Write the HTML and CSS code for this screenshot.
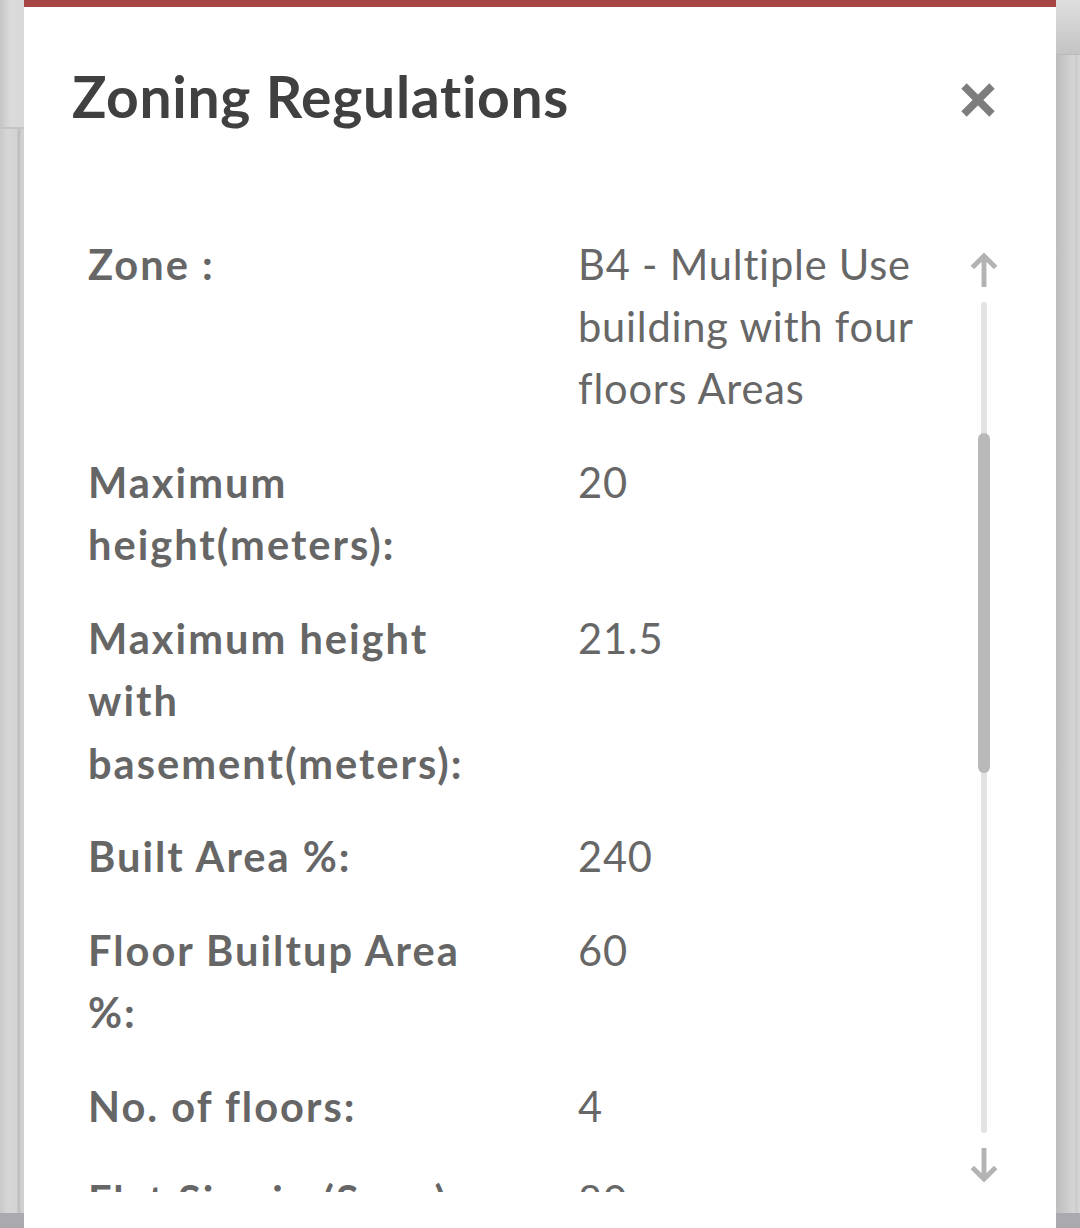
FILE: index.html
```html
<!DOCTYPE html>
<html lang="en">
<head>
<meta charset="utf-8">
<title>Zoning Regulations</title>
<link rel="stylesheet" href="styles.css">
</head>
<body>
<div class="side side-left"><div class="side-top"></div><div class="side-mid"></div><div class="side-foot"></div></div>
<section class="modal">
  <header class="modal-head">
    <h1 class="modal-title">Zoning Regulations</h1>
    <button class="close" aria-label="Close">
      <svg width="36" height="36" viewBox="0 0 36 36"><path d="M4 4L32 32M32 4L4 32" stroke="#7d7d7d" stroke-width="7.5" fill="none"/></svg>
    </button>
  </header>
  <div class="modal-body">
    <div class="rows">
      <div class="row"><div class="label">Zone :</div><div class="value">B4 - Multiple Use building with four floors Areas</div></div>
      <div class="row"><div class="label">Maximum height(meters):</div><div class="value">20</div></div>
      <div class="row"><div class="label">Maximum height with basement(meters):</div><div class="value">21.5</div></div>
      <div class="row"><div class="label">Built Area %:</div><div class="value">240</div></div>
      <div class="row"><div class="label">Floor Builtup Area %:</div><div class="value">60</div></div>
      <div class="row"><div class="label">No. of floors:</div><div class="value">4</div></div>
      <div class="row"><div class="label">Flat Size in (Sq m):</div><div class="value">80</div></div>
    </div>
    <div class="scrollbar">
      <svg class="arrow" width="30" height="36" viewBox="0 0 30 36"><path d="M15 35V4M3 15L15 3L27 15" stroke="#b3b3b3" stroke-width="5" fill="none"/></svg>
      <div class="track"><div class="thumb"></div></div>
      <svg class="arrow" width="30" height="36" viewBox="0 0 30 36"><path d="M15 1V32M3 21L15 33L27 21" stroke="#b3b3b3" stroke-width="5" fill="none"/></svg>
    </div>
  </div>
</section>
<div class="side side-right"><div class="side-top"></div><div class="side-mid"></div><div class="side-foot"></div></div>
</body>
</html>
```
FILE: styles.css
```css
html, body {
  margin: 0;
  padding: 0;
}
body {
  width: 1080px;
  height: 1228px;
  overflow: hidden;
  display: flex;
  background: #d0d0d0;
  font-family: Lato, "Noto Sans", sans-serif;
  font-variant-ligatures: none;
}
.side {
  width: 24px;
  display: flex;
  flex-direction: column;
}
.side-left .side-top {
  height: 127px;
  background: linear-gradient(to right, #c6c6c6, #dadada 10px, #d9d9d9);
  border-bottom: 2px solid #c4c4c4;
}
.side-left .side-mid {
  flex: 1;
  background: linear-gradient(to right, #c9c9c9, #d6d6d6 8px, #d3d3d3 17px, #bdbdbd 18px, #c2c2c2 20px, #d0d0d0 21px);
}
.side-right .side-top {
  height: 54px;
  background: linear-gradient(to bottom, #dedede, #c4c4c4);
  border-bottom: 1px solid #bababa;
}
.side-right .side-mid {
  flex: 1;
  background: linear-gradient(to right, #bdbdbd, #d5d5d5 18px, #c8c8c8 21px, #d6d6d6 22px);
}
.side-foot {
  height: 15px;
  background: #a9a9ae;
}
.modal {
  flex: 1;
  background: #fff;
  border-top: 7px solid #a84646;
  display: flex;
  flex-direction: column;
}
.modal-head {
  display: flex;
  justify-content: space-between;
  align-items: flex-start;
  padding: 55px 60px 0 48px;
  height: 210px;
  box-sizing: border-box;
}
.modal-title {
  margin: 0;
  font-size: 57px;
  line-height: 68px;
  font-weight: 700;
  color: #404040;
  letter-spacing: 0.7px;
}
.close {
  border: 0;
  background: none;
  padding: 0;
  margin-top: 20px;
  width: 36px;
  height: 36px;
  display: block;
}
.close svg { display: block; }
.modal-body {
  display: flex;
  height: 975px;
  padding: 0 57px 0 64px;
}
.rows {
  flex: 1;
  overflow: hidden;
}
.row {
  display: grid;
  grid-template-columns: 490px 1fr;
  padding: 15.6px 0;
  font-size: 41.6px;
  line-height: 62.4px;
  color: #666;
}
.label {
  font-weight: 700;
  padding-right: 90px;
  letter-spacing: 2px;
}
.value {
  font-weight: 400;
  color: #676767;
  padding-right: 30px;
  letter-spacing: 0.8px;
}
.scrollbar {
  width: 30px;
  display: flex;
  flex-direction: column;
  align-items: center;
  padding: 36px 0 10px;
  gap: 14px;
}
.arrow { display: block; flex: none; height: 35px; }
.track {
  flex: 1;
  width: 6px;
  border-radius: 3px;
  background: #e3e3e3;
}
.thumb {
  margin-top: 131px;
  margin-left: -3px;
  width: 12px;
  height: 340px;
  border-radius: 6px;
  background: #b9b9b9;
}
```
